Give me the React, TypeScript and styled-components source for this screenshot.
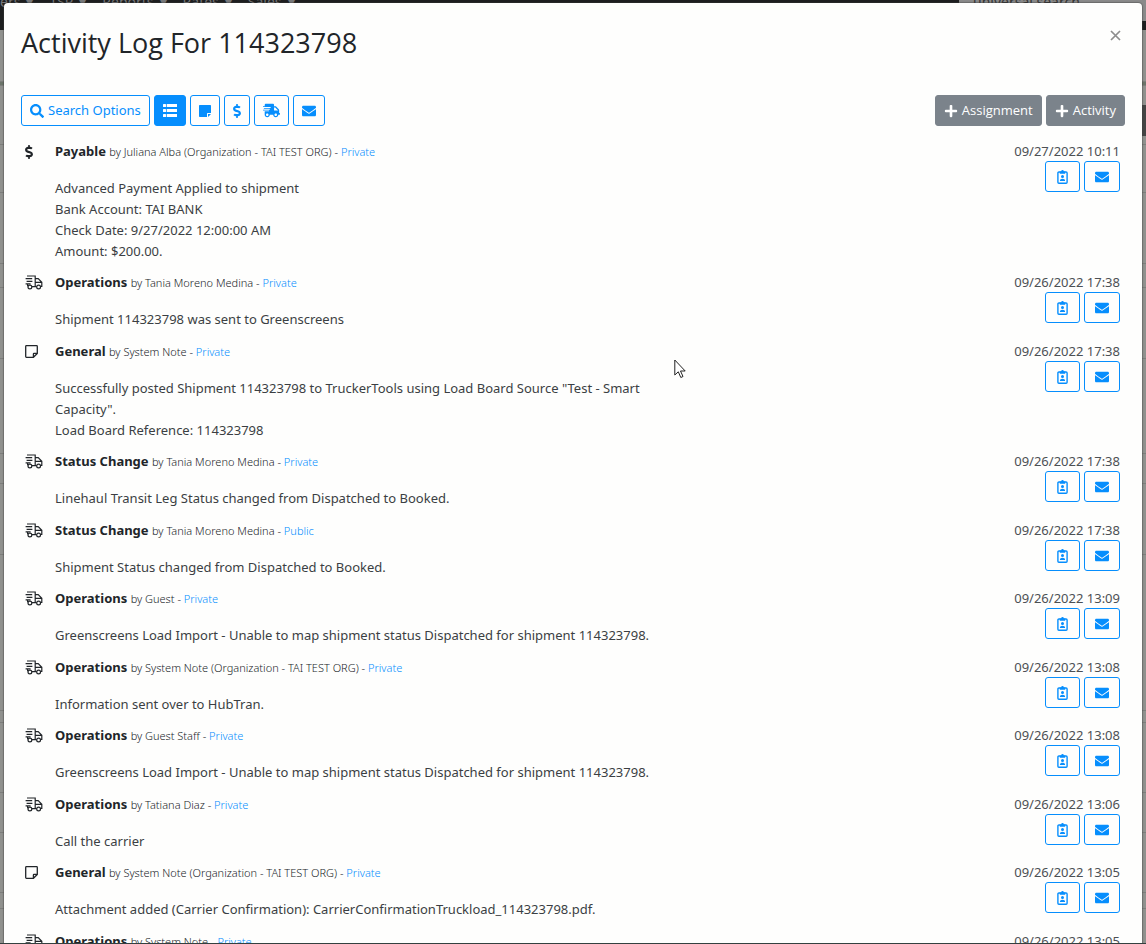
import React from 'react';
import styled, { createGlobalStyle } from 'styled-components';
import {
  FaDollarSign,
  FaEnvelope,
  FaPlus,
  FaSearch,
  FaShippingFast,
} from 'react-icons/fa';

const BLUE = '#068efd';

const GlobalStyle = createGlobalStyle`
  * { box-sizing: border-box; }
  body {
    margin: 0;
    overflow: hidden;
    background: #90918e;
    color: #212529;
    font-family: "Noto Sans", "Open Sans", sans-serif;
    font-size: 13px;
    line-height: 21px;
  }
  button { font: inherit; cursor: pointer; }
  svg { display: block; flex: none; }
`;

/* ---------- dimmed page under the dialog ---------- */

const Backdrop = styled.div`
  position: fixed;
  inset: 0;
  overflow: hidden;
  background: #90918e;
  border-bottom: 1px solid #33403f;
`;

const NavBar = styled.div`
  display: flex;
  height: 30px;
  background: #1d1e1f;
  color: #77787a;
  font-size: 14px;
  line-height: 4px;
`;

const NavItems = styled.div`
  display: flex;
  gap: 16px;
  flex: 1;
`;

const NavItem = styled.span`
  display: flex;
  gap: 6px;
`;

const NavSearch = styled.div`
  width: 187px;
  height: 21px;
  padding-left: 14px;
  background: #8a8a8a;
  color: #333;
`;

const Strip = styled.div<{ $h: number; $tone?: string }>`
  height: ${(p) => p.$h}px;
  background: ${(p) => p.$tone ?? 'transparent'};
  border-bottom: 1px solid #7d7e7b;
`;

const SideTab = styled.div`
  position: absolute;
  top: 105px;
  right: 0;
  width: 8px;
  height: 31px;
  background: #444;
`;

/* ---------- dialog ---------- */

const Overlay = styled.div`
  position: fixed;
  inset: 0 0 1px;
  overflow: hidden;
  padding: 3px 4px 0;
`;

const Dialog = styled.section`
  min-height: 100%;
  padding: 17px;
  border-radius: 4px;
  background: #fefefd;
  box-shadow: 0 0 1px 1px rgba(60, 60, 60, 0.4);
`;

const Header = styled.header`
  display: flex;
  justify-content: space-between;
  align-items: flex-start;
  margin-bottom: 32px;
`;

const Title = styled.h1`
  margin: 0;
  padding-top: 3px;
  font: 400 27px/40px "Open Sans", "Noto Sans", sans-serif;
`;

const CloseButton = styled.button`
  display: flex;
  padding: 10px 4px;
  border: 0;
  background: none;
  color: #8d8d8d;
`;

const Toolbar = styled.div`
  display: flex;
  justify-content: space-between;
  margin-bottom: 15px;
`;

const Group = styled.div`
  display: flex;
  gap: 4px;
`;

const Button = styled.button<{ $kind?: 'outline' | 'active' | 'solid'; $pad?: number }>`
  display: flex;
  align-items: center;
  justify-content: center;
  gap: 4px;
  height: 31px;
  padding: 0 ${(p) => p.$pad ?? 8}px;
  border: 1px solid ${(p) => (p.$kind === 'solid' ? '#7b838b' : BLUE)};
  border-radius: 3px;
  background: ${(p) =>
    p.$kind === 'solid' ? '#7b838b' : p.$kind === 'active' ? BLUE : '#fefefd'};
  color: ${(p) => (p.$kind === 'solid' || p.$kind === 'active' ? '#fff' : BLUE)};
  font-family: ${(p) => (p.$kind === 'solid' ? '"Open Sans", "Noto Sans", sans-serif' : 'inherit')};
  font-weight: ${(p) => (p.$kind === 'solid' ? 500 : 400)};
`;

const Log = styled.ul`
  margin: 0;
  padding: 0 5px 0 4px;
  list-style: none;
`;

const Entry = styled.li`
  display: flex;
  padding-bottom: 10px;
  &:nth-child(even) { padding-bottom: 11px; }
`;

const IconCell = styled.div`
  display: flex;
  align-items: center;
  width: 30px;
  height: 21px;
`;

const Body = styled.div`
  flex: 1;
`;

const Heading = styled.div`
  margin-bottom: 16px;
  white-space: nowrap;
`;

const Kind = styled.strong`
  font-weight: 700;
`;

const Byline = styled.span`
  font-size: 11px;
  font-weight: 300;
`;

const Visibility = styled.a`
  color: ${BLUE};
  text-decoration: none;
`;

const Message = styled.p`
  max-width: 620px;
  margin: 0;
  color: #3b3f43;
  white-space: pre-line;
`;

const Side = styled.div`
  display: flex;
  flex-direction: column;
  align-items: flex-end;
  height: 51px;
`;

const Time = styled.time`
  height: 20px;
  color: #4c5054;
`;

const Pointer = styled.svg`
  position: absolute;
  left: 674px;
  top: 359px;
`;

/* ---------- icons ---------- */

const DollarIcon = styled(FaDollarSign)`
  width: 8px;
  height: 14px;
`;

const ListIcon = () => (
  <svg width="14" height="13" viewBox="0 0 14 13" fill="currentColor">
    {[0, 5, 10].map((y) => (
      <g key={y}>
        <rect x="0" y={y} width="3" height="3" rx="0.5" />
        <rect x="3.7" y={y} width="11" height="3" rx="0.5" />
      </g>
    ))}
  </svg>
);

const NoteIcon = () => (
  <svg width="12" height="12" viewBox="0 0 12 12" fill="currentColor">
    <path d="M.7 0h10.600a.7.7 0 0 1 .7.7V8H8.700a.7.7 0 0 0-.7.7V12H.7a.7.7 0 0 1-.7-.7V.7A.7.7 0 0 1 .7 0zM9 9h3l-3 3z" />
  </svg>
);

const NoteOutline = () => (
  <svg width="13" height="13" viewBox="0 0 13 13" fill="none" stroke="currentColor" strokeWidth="1.3">
    <path d="M1.400.7h10.200a.7.7 0 0 1 .7.7v7l-3.900 3.900h-7a.7.7 0 0 1-.7-.7V1.400a.7.7 0 0 1 .7-.7zM12.300 8.400H9a.6.6 0 0 0-.6.6v3.300" />
  </svg>
);

const TruckOutline = () => (
  <svg width="18" height="15" viewBox="0 0 18 15" fill="none" stroke="currentColor" strokeWidth="1.2">
    <path d="M2 1h8.2v10.2M0.6 3.7h6.6M1.6 6.3h5.8M0.6 8.9h5M2.6 8.9v2.4M10.2 3.6h3l3.6 3.7v4h-1M10.2 7.4h6.4M7 11.6h4.6" />
    <circle cx="4.9" cy="12" r="1.9" />
    <circle cx="13.6" cy="12" r="1.9" />
  </svg>
);

const BadgeIcon = () => (
  <svg width="13" height="14" viewBox="0 0 13 14">
    <rect x="1.9" y="2" width="9.2" height="11.2" rx="1" fill="none" stroke="currentColor" strokeWidth="1.4" />
    <path d="M3.8 1.4h1.4a1.3 1.3 0 0 1 2.6 0h1.4v2.4H3.8z" fill="currentColor" />
    <circle cx="6.5" cy="6.6" r="1.5" fill="currentColor" />
    <path d="M3.9 11c0-1.600 1-2.300 2.600-2.300s2.600.7 2.600 2.300z" fill="currentColor" />
  </svg>
);

const CloseIcon = () => (
  <svg width="11" height="11" viewBox="0 0 11 11" stroke="currentColor" strokeWidth="1.7">
    <path d="M1 1l9 9M10 1l-9 9" />
  </svg>
);

/* ---------- data ---------- */

type Item = {
  icon: 'pay' | 'truck' | 'note';
  kind: string;
  by: string;
  access?: string;
  text: string;
  time: string;
};

const unmapped =
  'Greenscreens Load Import - Unable to map shipment status Dispatched for shipment 114323798.';

const items: Item[] = [
  { icon: 'pay', kind: 'Payable', by: 'Juliana Alba (Organization - TAI TEST ORG)', time: '09/27/2022 10:11',
    text: 'Advanced Payment Applied to shipment\nBank Account: TAI BANK\nCheck Date: 9/27/2022 12:00:00 AM\nAmount: $200.00.' },
  { icon: 'truck', kind: 'Operations', by: 'Tania Moreno Medina', time: '09/26/2022 17:38',
    text: 'Shipment 114323798 was sent to Greenscreens' },
  { icon: 'note', kind: 'General', by: 'System Note', time: '09/26/2022 17:38',
    text: 'Successfully posted Shipment 114323798 to TruckerTools using Load Board Source "Test - Smart Capacity".\nLoad Board Reference: 114323798' },
  { icon: 'truck', kind: 'Status Change', by: 'Tania Moreno Medina', time: '09/26/2022 17:38',
    text: 'Linehaul Transit Leg Status changed from Dispatched to Booked.' },
  { icon: 'truck', kind: 'Status Change', by: 'Tania Moreno Medina', access: 'Public', time: '09/26/2022 17:38',
    text: 'Shipment Status changed from Dispatched to Booked.' },
  { icon: 'truck', kind: 'Operations', by: 'Guest', time: '09/26/2022 13:09', text: unmapped },
  { icon: 'truck', kind: 'Operations', by: 'System Note (Organization - TAI TEST ORG)', time: '09/26/2022 13:08',
    text: 'Information sent over to HubTran.' },
  { icon: 'truck', kind: 'Operations', by: 'Guest Staff', time: '09/26/2022 13:08', text: unmapped },
  { icon: 'truck', kind: 'Operations', by: 'Tatiana Diaz', time: '09/26/2022 13:06', text: 'Call the carrier' },
  { icon: 'note', kind: 'General', by: 'System Note (Organization - TAI TEST ORG)', time: '09/26/2022 13:05',
    text: 'Attachment added (Carrier Confirmation): CarrierConfirmationTruckload_114323798.pdf.' },
  { icon: 'truck', kind: 'Operations', by: 'System Note', time: '09/26/2022 13:05', text: '' },
];

const entryIcon = {
  pay: <DollarIcon />,
  truck: <TruckOutline />,
  note: <NoteOutline />,
};

const LogEntry = ({ item }: { item: Item }) => (
  <Entry>
    <IconCell>{entryIcon[item.icon]}</IconCell>
    <Body>
      <Heading>
        <Kind>{item.kind}</Kind>{' '}
        <Byline>
          by {item.by} - <Visibility href="#">{item.access ?? 'Private'}</Visibility>
        </Byline>
      </Heading>
      <Message>{item.text}</Message>
    </Body>
    <Side>
      <Time>{item.time}</Time>
      <Group>
        <Button type="button" $pad={10} aria-label="Assign"><BadgeIcon /></Button>
        <Button type="button" $pad={10} aria-label="Email"><FaEnvelope size={14} /></Button>
      </Group>
    </Side>
  </Entry>
);

const navItems = ['ers', 'TSP', 'Reports', 'Rates', 'Sales'];

export default function App() {
  return (
    <>
      <GlobalStyle />
      <Backdrop aria-hidden="true">
        <NavBar>
          <NavItems>
            {navItems.map((n) => (
              <NavItem key={n}>{n}<span>▾</span></NavItem>
            ))}
          </NavItems>
          <NavSearch>universal search</NavSearch>
        </NavBar>
        <Strip $h={52} />
        <Strip $h={4} $tone="#6c756a" />
        {[59, 48, 71, 24, 71, 95, 30, 71, 156, 12, 70, 40, 60, 16].map((h, i) => (
          <Strip key={i} $h={h} />
        ))}
        <SideTab />
      </Backdrop>
      <Overlay>
        <Dialog role="dialog" aria-labelledby="log-title">
          <Header>
            <Title id="log-title">Activity Log For 114323798</Title>
            <CloseButton type="button" aria-label="Close"><CloseIcon /></CloseButton>
          </Header>
          <Toolbar>
            <Group>
              <Button type="button"><FaSearch size={14} />Search Options</Button>
              <Button type="button" $kind="active" aria-label="All"><ListIcon /></Button>
              <Button type="button" aria-label="Notes"><NoteIcon /></Button>
              <Button type="button" aria-label="Payables"><DollarIcon /></Button>
              <Button type="button" aria-label="Operations"><FaShippingFast size={17} /></Button>
              <Button type="button" aria-label="Emails"><FaEnvelope size={14} /></Button>
            </Group>
            <Group>
              <Button type="button" $kind="solid"><FaPlus size={14} />Assignment</Button>
              <Button type="button" $kind="solid"><FaPlus size={14} />Activity</Button>
            </Group>
          </Toolbar>
          <Log>
            {items.map((item, i) => (
              <LogEntry key={i} item={item} />
            ))}
          </Log>
        </Dialog>
      </Overlay>
      <Pointer width="12" height="20" viewBox="0 0 12 20" aria-hidden="true">
        <path d="M.8 1v15l3.500-3.200 2.500 5.700 2.200-1-2.500-5.500h4.700z" fill="#fff" stroke="#222" strokeWidth="1" />
      </Pointer>
    </>
  );
}
